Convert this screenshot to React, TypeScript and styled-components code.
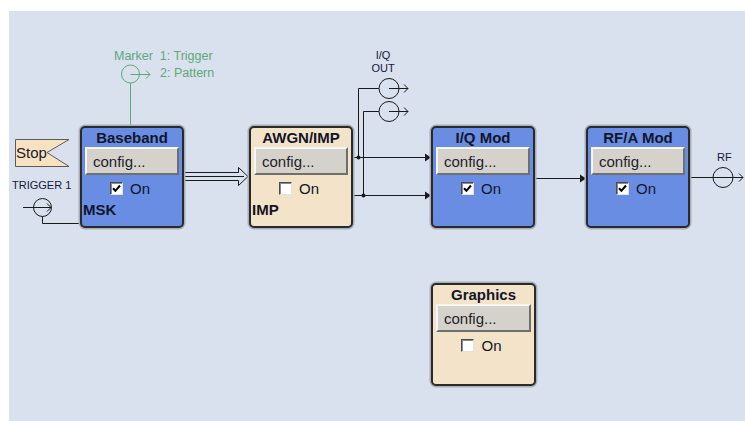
import React from 'react';
import styled, { createGlobalStyle } from 'styled-components';

const OX = 9;
const OY = 11;

const Global = createGlobalStyle`
  html, body { margin: 0; padding: 0; background: #ffffff; }
  body { font-family: "Liberation Sans", Arial, sans-serif; }
`;

const Page = styled.div`
  width: 745px;
  height: 421px;
  box-sizing: border-box;
  padding: ${OY}px 0 0 ${OX}px;
  overflow: hidden;
`;

const Panel = styled.div`
  position: relative;
  width: 736px;
  height: 410px;
  background: #d9e0ee;
`;

const Wires = styled.svg`
  position: absolute;
  left: 0;
  top: 0;
  width: 736px;
  height: 410px;
`;

type Variant = 'blue' | 'tan';

const Block = styled.div<{ $variant: Variant; $x: number; $y: number; $w: number; $h: number }>`
  position: absolute;
  left: ${(p) => p.$x - OX}px;
  top: ${(p) => p.$y - OY}px;
  width: ${(p) => p.$w}px;
  height: ${(p) => p.$h}px;
  box-sizing: border-box;
  border: 2px solid #2a2a2a;
  border-radius: 5px;
  box-shadow: 0 0 0 1.5px #a7adba;
  background: ${(p) => (p.$variant === 'blue' ? '#6a8de4' : '#f3e3c9')};
  display: flex;
  flex-direction: column;
`;

const Title = styled.div`
  height: 19px;
  line-height: 20px;
  font-size: 15px;
  font-weight: bold;
  text-align: center;
  color: #111628;
  white-space: nowrap;
`;

const ConfigButton = styled.div`
  margin: 0 3px;
  height: 28px;
  box-sizing: border-box;
  background: #d5d2cc;
  border: 2px solid;
  border-color: #f6f6f4 #6f6f6f #6f6f6f #f6f6f4;
  padding-left: 6px;
  display: flex;
  align-items: center;
  font-size: 15px;
  color: #1e1e2a;
`;

const OnRow = styled.label`
  height: 26px;
  display: flex;
  align-items: center;
  justify-content: center;
  gap: 7px;
  padding-right: 4px;
  font-size: 15px;
  color: #111628;
`;

const Check = styled.span`
  width: 13px;
  height: 13px;
  box-sizing: border-box;
  background: #ffffff;
  border: 1px solid;
  border-color: #4a4a4a #e2e2e2 #e2e2e2 #4a4a4a;
  box-shadow: inset 1px 1px 0 #8a8a8a;
  display: flex;
  align-items: center;
  justify-content: center;
`;

const Mode = styled.div`
  height: 18px;
  line-height: 18px;
  padding-left: 1px;
  font-size: 15px;
  font-weight: bold;
  color: #111628;
`;

const Label = styled.span<{ $x: number; $y: number; $size: number; $green?: boolean }>`
  position: absolute;
  left: ${(p) => p.$x - OX}px;
  top: ${(p) => p.$y - OY}px;
  font-size: ${(p) => p.$size}px;
  line-height: ${(p) => p.$size + 2}px;
  color: ${(p) => (p.$green ? '#5ea878' : '#16183a')};
  white-space: pre;
`;

const CenterStack = styled.div<{ $x: number; $y: number }>`
  position: absolute;
  left: ${(p) => p.$x - OX}px;
  top: ${(p) => p.$y - OY}px;
  width: 30px;
  display: flex;
  flex-direction: column;
  align-items: center;
  font-size: 11px;
  line-height: 13px;
  color: #16183a;
`;

const FlagText = styled.span`
  position: absolute;
  left: ${16 - OX}px;
  top: ${144 - OY}px;
  font-size: 15px;
  line-height: 17px;
  color: #1a1a2a;
`;

type BlockDef = {
  title: string;
  variant: Variant;
  x: number;
  y: number;
  w: number;
  h: number;
  on: boolean;
  mode?: string;
};

const blocks: BlockDef[] = [
  { title: 'Baseband', variant: 'blue', x: 80, y: 126, w: 104, h: 102, on: true, mode: 'MSK' },
  { title: 'AWGN/IMP', variant: 'tan', x: 249, y: 126, w: 104, h: 102, on: false, mode: 'IMP' },
  { title: 'I/Q Mod', variant: 'blue', x: 431, y: 126, w: 104, h: 102, on: true },
  { title: 'RF/A Mod', variant: 'blue', x: 586, y: 126, w: 104, h: 102, on: true },
  { title: 'Graphics', variant: 'tan', x: 431, y: 283, w: 105, h: 103, on: false },
];

const CheckMark = () => (
  <svg width="9" height="9" viewBox="0 0 9 9">
    <path d="M1 4.2 L3.4 6.8 L8 1.5" fill="none" stroke="#000" strokeWidth="2" />
  </svg>
);

const FuncBlock = ({ b }: { b: BlockDef }) => (
  <Block $variant={b.variant} $x={b.x} $y={b.y} $w={b.w} $h={b.h}>
    <Title>{b.title}</Title>
    <ConfigButton>config...</ConfigButton>
    <OnRow>
      <Check>{b.on && <CheckMark />}</Check>
      On
    </OnRow>
    {b.mode && <Mode>{b.mode}</Mode>}
  </Block>
);

const INK = '#1a1a1a';
const GREEN = '#5ea878';

const Arrow = ({ x, y }: { x: number; y: number }) => (
  <polygon points={`${x - 6},${y - 4} ${x},${y} ${x - 6},${y + 4}`} fill={INK} />
);

const OpenHead = ({ x, y, color = INK }: { x: number; y: number; color?: string }) => (
  <polyline points={`${x - 4},${y - 4} ${x},${y} ${x - 4},${y + 4}`} fill="none" stroke={color} />
);

export default function App() {
  return (
    <>
      <Global />
      <Page>
        <Panel>
          <Wires viewBox={`${OX} ${OY} 736 410`}>
            {/* marker */}
            <circle cx={130.5} cy={74} r={9} fill="none" stroke={GREEN} />
            <line x1={130.5} y1={74.5} x2={150} y2={74.5} stroke={GREEN} />
            <OpenHead x={150} y={74.5} color={GREEN} />
            <line x1={130.5} y1={83} x2={130.5} y2={126} stroke={GREEN} />

            {/* stop flag */}
            <polygon
              points="15.5,139.5 69,139.5 47,152.5 69,166.5 15.5,166.5"
              fill="#f6e2c0"
              stroke="#5a5a5a"
            />

            {/* trigger */}
            <line x1={23} y1={207.5} x2={51} y2={207.5} stroke={INK} />
            <OpenHead x={51} y={207.5} />
            <circle cx={42.5} cy={207.5} r={9} fill="none" stroke={INK} />
            <polyline points="42.5,216.5 42.5,223.5 80,223.5" fill="none" stroke={INK} />

            {/* baseband -> awgn */}
            <path
              d="M184 172.5 H238.5 V167.5 L248 176.5 L238.5 185.5 V180.5 H184"
              fill="none"
              stroke={INK}
            />
            <line x1={184} y1={176.5} x2={244} y2={176.5} stroke={INK} />

            {/* awgn -> iq mod */}
            <line x1={353} y1={157.5} x2={426} y2={157.5} stroke={INK} />
            <Arrow x={431} y={157.5} />
            <line x1={353} y1={195.5} x2={426} y2={195.5} stroke={INK} />
            <Arrow x={431} y={195.5} />
            <circle cx={358.5} cy={157.5} r={2} fill={INK} />
            <circle cx={363.5} cy={195.5} r={2} fill={INK} />
            <polyline points="358.5,157.5 358.5,88.5 379,88.5" fill="none" stroke={INK} />
            <polyline points="363.5,195.5 363.5,111.5 379,111.5" fill="none" stroke={INK} />
            <circle cx={389} cy={88.5} r={10} fill="none" stroke={INK} />
            <line x1={389} y1={88.5} x2={408} y2={88.5} stroke={INK} />
            <OpenHead x={408} y={88.5} />
            <circle cx={389} cy={111.5} r={10} fill="none" stroke={INK} />
            <line x1={389} y1={111.5} x2={408} y2={111.5} stroke={INK} />
            <OpenHead x={408} y={111.5} />

            {/* iq mod -> rf */}
            <line x1={535} y1={178.5} x2={581} y2={178.5} stroke={INK} />
            <Arrow x={586} y={178.5} />

            {/* rf out */}
            <line x1={690} y1={177.5} x2={743} y2={177.5} stroke={INK} />
            <circle cx={723} cy={177.5} r={10} fill="none" stroke={INK} />
            <OpenHead x={743} y={177.5} />
          </Wires>

          <Label $x={114} $y={49} $size={12.5} $green>{'Marker  1: Trigger'}</Label>
          <Label $x={160} $y={66} $size={12.5} $green>2: Pattern</Label>
          <Label $x={12} $y={179} $size={11}>TRIGGER 1</Label>
          <FlagText>Stop</FlagText>
          <CenterStack $x={368} $y={49}>
            <span>I/Q</span>
            <span>OUT</span>
          </CenterStack>
          <Label $x={717} $y={151} $size={11}>RF</Label>

          {blocks.map((b) => (
            <FuncBlock key={b.title} b={b} />
          ))}
        </Panel>
      </Page>
    </>
  );
}
